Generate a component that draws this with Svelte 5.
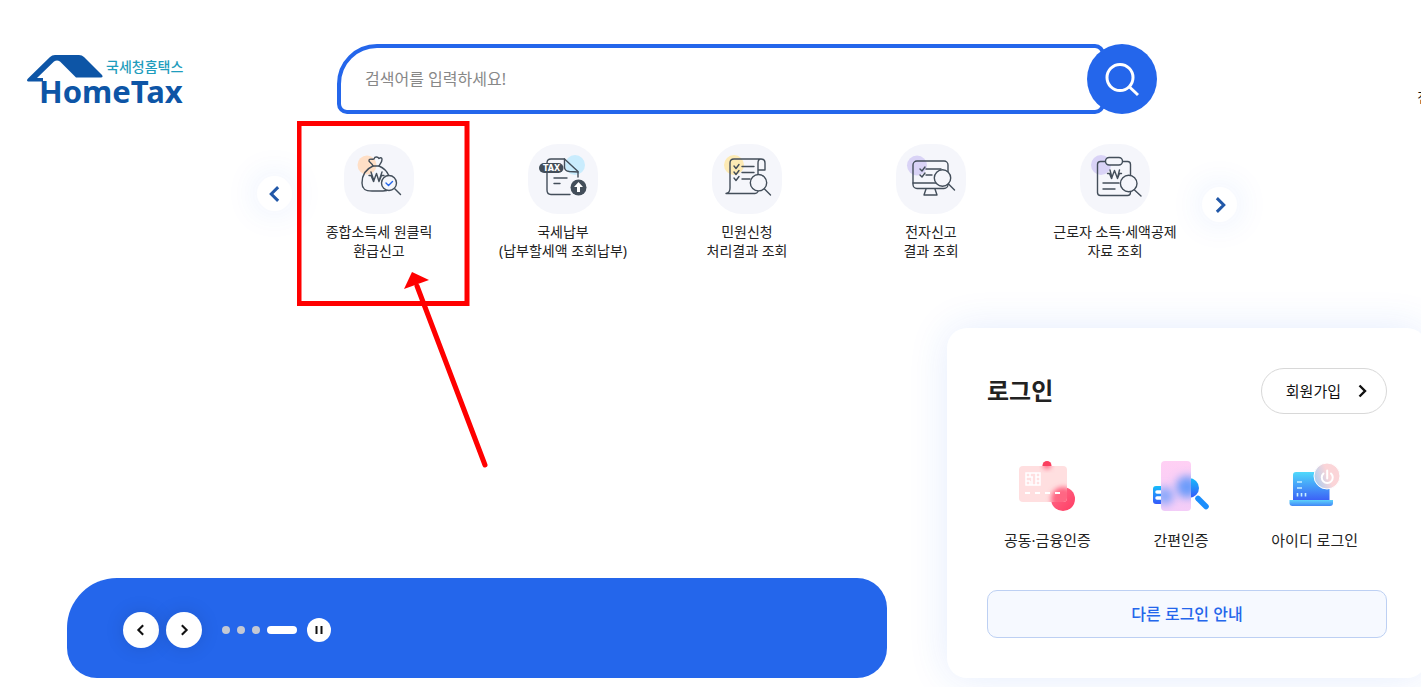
<script>
  const menus = [
    { icon: "refund", lines: ["종합소득세 원클릭", "환급신고"] },
    { icon: "tax", lines: ["국세납부", "(납부할세액 조회납부)"] },
    { icon: "petition", lines: ["민원신청", "처리결과 조회"] },
    { icon: "efile", lines: ["전자신고", "결과 조회"] },
    { icon: "worker", lines: ["근로자 소득·세액공제", "자료 조회"] },
  ];

  const logins = [
    { icon: "cert", label: "공동·금융인증" },
    { icon: "simple", label: "간편인증" },
    { icon: "id", label: "아이디 로그인" },
  ];

  const slides = [0, 1, 2, 3];
  let current = $state(3);
  let playing = $state(true);
  let keyword = $state("");

  function move(step) {
    current = (current + step + slides.length) % slides.length;
  }
</script>

{#snippet chevron(dir)}
  <svg class="chevron" viewBox="0 0 16 16" aria-hidden="true">
    <path d={dir === "left" ? "M10.5 2.5 5 8l5.5 5.5" : "M5.5 2.5 11 8l-5.5 5.5"} />
  </svg>
{/snippet}

<div class="page">
  <header>
    <a class="logo" href="#home" aria-label="국세청홈택스 HomeTax">
      <svg width="162" height="54" viewBox="0 0 162 54">
        <path d="M1 28.500q-2-1 0-3L23 4q2-2 5-2h24q3 0 5 2l18 18q1.500 2-1 2.500H49L33 8.500q-3-2-6 0L10 25h6v3.500z" fill="#0d55a6" />
        <text class="logo-ko" x="79" y="19">국세청홈택스</text>
        <text class="logo-en" x="12" y="50">HomeTax</text>
      </svg>
    </a>
    <form class="search" role="search" onsubmit={(e) => e.preventDefault()}>
      <input type="text" aria-label="검색어" placeholder="검색어를 입력하세요!" bind:value={keyword} />
      <button type="submit" aria-label="검색">
        <svg width="36" height="36" viewBox="0 0 36 36">
          <circle cx="16" cy="16.500" r="13" />
          <path d="m25 25.500 9 8.500" />
        </svg>
      </button>
    </form>
    <a class="all" href="#menu">전</a>
  </header>

  <nav class="quick">
    <button class="arrow prev" type="button" aria-label="이전">{@render chevron("left")}</button>
    <ul>
      {#each menus as menu, i}
        <li>
          <a href="#{menu.icon}">
            <svg class="tile" viewBox="0 0 70 70" aria-hidden="true">
              {#if menu.icon === "refund"}
                <circle class="dot" cx="23" cy="21" r="9.500" fill="#ffdfc6" />
                <path d="M29 22c-1-3-5-4-4-6 1-2 4 0 5-1 1-3 4-2 5-.500 2-1.500 3-.500 3 1 0 3-2 4-3 6.500z" />
                <path d="M29 22c-7 3-11 9-11 17 0 6 3 8 10 8h11c3 0 5-1 6-2M35 22c5 2 8 5 10 10" />
                <path d="M25 31.500h2l2.500 6 3-8 2.500 8 2.500-6H40M27 28l3 9M38 28l-3 9" />
                <circle cx="45" cy="39" r="7.500" fill="#f5f6fb" />
                <path d="m51 45 5.500 5.500" />
                <path d="m42 39 2.500 2.500 4-4" stroke="#2466eb" />
              {:else if menu.icon === "tax"}
                <circle class="dot" cx="47" cy="21" r="10" fill="#c9ecfd" />
                <path d="M19 19q0-4 4-4h13.500L50 27.500V33M19 29v17q0 4.500 4 4.500h19" />
                <path d="M36.500 15v8q0 4 5 4.500l8.500.500" />
                <path d="M26 34h13M26 39.500h6" />
                <rect class="solid" x="11" y="19" width="24.500" height="10" rx="5" />
                <text x="23.500" y="27">TAX</text>
                <circle class="solid" cx="50.500" cy="43.500" r="8" />
                <path d="M50.500 38 55 43h-3v5h-3v-5h-3z" fill="#fff" stroke="none" />
              {:else if menu.icon === "petition"}
                <circle class="dot" cx="22" cy="21" r="10" fill="#fdeab4" />
                <path d="M49 15H22q-4 0-4 4v25q0 5-4 5.500h29q2 0 3-2M46 31V19q0-4 3-4 4 0 4 4v7h-7" />
                <path d="m22 22 2 2.500 3-4M22 28l2 2.500 3-4M22 34l2 2.500 3-4M30 22.500h12M30 28.500h12M30 35h8" />
                <circle cx="46.500" cy="38.700" r="8.200" fill="#f5f6fb" />
                <path d="m52.500 45 6 6" />
              {:else if menu.icon === "efile"}
                <circle class="dot" cx="21" cy="21.500" r="10" fill="#d9d3f6" />
                <rect x="17" y="17" width="35" height="27.500" rx="4" />
                <path d="M17 39h35M30 45l-2 6h13l-2-6" />
                <path d="m24 25 2 2 3-4M24 31l2 2 3-4M30 25h15M30 31h6" />
                <circle cx="46.500" cy="34" r="8.200" fill="#f5f6fb" />
                <path d="m52.500 40 6 6" />
              {:else}
                <circle class="dot" cx="21" cy="21" r="10" fill="#d9d3f6" />
                <rect x="17.500" y="17.500" width="33" height="34" rx="3" />
                <rect x="25.500" y="13.500" width="17" height="7.500" rx="3.700" fill="#f5f6fb" />
                <path d="M27.500 29.500h2l2 5 3-8 3 8 2-5h2M30 26l2 8M39.500 26l-2 8M23 39h16M23 45h12" />
                <circle cx="48.700" cy="39.500" r="8.300" fill="#f5f6fb" />
                <path d="m54.500 46 6.500 6" />
              {/if}
            </svg>
            <span>{menu.lines[0]}<br />{menu.lines[1]}</span>
          </a>
          {#if i === 0}
            <svg class="marker" width="200" height="352" viewBox="0 0 200 352" aria-hidden="true">
              <rect x="2" y="2.500" width="168" height="180" />
              <path d="M188 344 120 165" />
              <path class="head" d="m115 151 17 8-25 9z" />
            </svg>
          {/if}
        </li>
      {/each}
    </ul>
    <button class="arrow next" type="button" aria-label="다음">{@render chevron("right")}</button>
  </nav>

  <main>
    <section class="banner" aria-label="배너">
      <button class="round" type="button" aria-label="이전 배너" onclick={() => move(-1)}>{@render chevron("left")}</button>
      <button class="round" type="button" aria-label="다음 배너" onclick={() => move(1)}>{@render chevron("right")}</button>
      <div class="dots">
        {#each slides as n}
          <button type="button" class:on={n === current} aria-label="배너 {n + 1}" onclick={() => (current = n)}></button>
        {/each}
      </div>
      <button class="pause" type="button" aria-label="정지" onclick={() => (playing = !playing)}>
        <svg width="8" height="8" viewBox="0 0 8 8">
          <path d={playing ? "M1.500 0v8M6.500 0v8" : "M1 0v8l6-4z"} />
        </svg>
      </button>
    </section>

    <section class="login">
      <div class="login-head">
        <h2>로그인</h2>
        <a class="join" href="#join">회원가입 {@render chevron("right")}</a>
      </div>
      <ul>
        {#each logins as login}
          <li>
            <a href="#{login.icon}">
              <svg width="60" height="60" viewBox="0 0 60 60" aria-hidden="true">
                {#if login.icon === "cert"}
                  <defs>
                    <linearGradient id="red" x1="0" y1="0" x2="1" y2="1">
                      <stop offset="0" stop-color="#ff6f8c" />
                      <stop offset="1" stop-color="#ff3c63" />
                    </linearGradient>
                    <filter id="soft" x="-50%" y="-50%" width="200%" height="200%"><feGaussianBlur stdDeviation="2.500" /></filter>
                    <clipPath id="card"><rect x="2" y="10" width="48" height="36" rx="4" /></clipPath>
                  </defs>
                  <circle cx="30" cy="9.500" r="4.500" fill="#fa3f5f" />
                  <circle cx="46" cy="43" r="12" fill="url(#red)" />
                  <g clip-path="url(#card)">
                    <rect x="2" y="10" width="48" height="36" fill="#ffdfe0" />
                    <circle cx="46" cy="43" r="12" fill="#ff6683" filter="url(#soft)" />
                    <circle cx="30" cy="9" r="4" fill="#ff6683" filter="url(#soft)" />
                  </g>
                  <path d="M9 17h14v12H9zM13 17v4H9M13 25v4M9 25h4M19 17v12M15 21v8M13 21h3M19 21h4M19 25h4" fill="none" stroke="#fff" stroke-width="1.500" />
                  <path d="M8 37h5M18 37h5M28 37h5M38 37h5" stroke="#fff" stroke-width="2" />
                {:else if login.icon === "simple"}
                  <defs>
                    <linearGradient id="blue" x1="0" y1="0" x2="0" y2="1">
                      <stop offset="0" stop-color="#16bdfb" />
                      <stop offset="1" stop-color="#3558fa" />
                    </linearGradient>
                    <linearGradient id="pink" x1="0" y1="0" x2="0" y2="1">
                      <stop offset="0" stop-color="#ffd0f4" />
                      <stop offset="1" stop-color="#f4cdf8" />
                    </linearGradient>
                    <filter id="blob" x="-80%" y="-80%" width="260%" height="260%"><feGaussianBlur stdDeviation="4.500" /></filter>
                    <clipPath id="phone"><rect x="10" y="5" width="30" height="50" rx="4" /></clipPath>
                  </defs>
                  <rect x="2" y="30" width="20" height="18" rx="3" fill="url(#blue)" />
                  <path d="M6 36h5M6 42h5" stroke="#fff" stroke-width="3.500" stroke-linecap="round" />
                  <circle cx="38" cy="32" r="10" fill="url(#blue)" />
                  <path d="m47 42.500 8 8" stroke="#1b8efc" stroke-width="5.500" stroke-linecap="round" />
                  <g clip-path="url(#phone)">
                    <rect x="10" y="5" width="30" height="50" fill="url(#pink)" />
                    <circle cx="36" cy="31" r="11" fill="#6d9cfa" filter="url(#blob)" />
                    <circle cx="14" cy="40" r="9" fill="#8aa8fb" filter="url(#blob)" />
                  </g>
                {:else}
                  <defs>
                    <linearGradient id="screen" x1="0" y1="0" x2="0" y2="1">
                      <stop offset="0" stop-color="#4fd9fb" />
                      <stop offset="1" stop-color="#3c62f6" />
                    </linearGradient>
                    <linearGradient id="base" x1="0" y1="0" x2="0" y2="1">
                      <stop offset="0" stop-color="#5ed2fb" />
                      <stop offset="1" stop-color="#4386f7" />
                    </linearGradient>
                    <linearGradient id="power" x1="0" y1=".8" x2="1" y2=".4">
                      <stop offset="0" stop-color="#a5cdf3" />
                      <stop offset=".6" stop-color="#fbd5d8" />
                    </linearGradient>
                  </defs>
                  <path d="M8 44V19q0-3 3-3h33.500v28z" fill="url(#screen)" />
                  <path d="M4.500 44H48v3q0 3-3 3H7.500q-3 0-3-3z" fill="url(#base)" />
                  <path d="M12 26h5M12 32h5M12.500 37v3.500M16.500 37v3.500M20.500 37v3.500" stroke="#c9f0ff" stroke-width="1.600" />
                  <circle cx="42" cy="20" r="13" fill="url(#power)" stroke="#fff" />
                  <path d="M38.500 17.500a5.500 5.500 0 1 0 7.500 0M42.200 14.500v8" fill="none" stroke="#fff" stroke-width="2" stroke-linecap="round" />
                {/if}
              </svg>
              <span>{login.label}</span>
            </a>
          </li>
        {/each}
      </ul>
      <a class="guide" href="#guide">다른 로그인 안내</a>
    </section>
  </main>
</div>

<style>
  :global(body) {
    background: #fff;
    color: #222;
    font-family: "Noto Sans", "Noto Sans CJK KR", sans-serif;
    font-size: 15px;
  }
  .page {
    overflow: hidden;
    padding: 44px 0 9px 67px;
  }
  a {
    color: inherit;
    text-decoration: none;
  }
  button {
    padding: 0;
    border: 0;
    cursor: pointer;
    font: inherit;
  }
  ul {
    display: flex;
    margin: 0;
    padding: 0;
    list-style: none;
  }
  .chevron {
    width: 16px;
    height: 16px;
    fill: none;
    stroke: currentColor;
    stroke-width: 2.4;
  }

  /* header */
  header {
    display: grid;
    grid-template-columns: 1fr minmax(0, 820px) 1fr;
    margin-right: -6px;
  }
  .logo {
    margin: 9px 0 0 -40px;
  }
  .logo svg {
    display: block;
    overflow: visible;
  }
  .logo-ko {
    fill: #1f9dbd;
    font-size: 14px;
    font-weight: 500;
  }
  .logo-en {
    fill: #0d55a6;
    font-size: 31px;
    font-weight: 700;
  }
  .search {
    display: flex;
    height: 70px;
  }
  .search input {
    flex: 1;
    min-width: 0;
    box-sizing: border-box;
    padding: 0 24px;
    border: 4px solid #2466eb;
    border-radius: 40px 10px 10px 10px;
    background: #fff;
    font: inherit;
    font-size: 16px;
    outline: none;
  }
  .search input::placeholder {
    color: #888;
  }
  .search button {
    display: grid;
    place-items: center;
    width: 70px;
    margin-left: -18px;
    border-radius: 50%;
    background: #2466eb;
  }
  .search svg {
    fill: none;
    stroke: #fff;
    stroke-width: 3;
  }
  .all {
    justify-self: end;
    align-self: end;
    margin: 0 -4px 7px 0;
    color: #111;
  }

  /* quick menu */
  .quick {
    display: flex;
    align-items: flex-start;
    justify-content: center;
    margin: 30px -6px 0 0;
  }
  .quick ul {
    flex: 0 1 920px;
  }
  .quick li {
    position: relative;
    flex: 1;
  }
  .quick li a {
    display: flex;
    flex-direction: column;
    align-items: center;
    gap: 8px;
    font-size: 14px;
    line-height: 19px;
    text-align: center;
    white-space: nowrap;
  }
  .tile {
    width: 70px;
    height: 70px;
    border-radius: 30px;
    background: #f5f6fb;
    fill: none;
    stroke: #434e5a;
    stroke-width: 1.4;
    stroke-linecap: round;
    stroke-linejoin: round;
  }
  .tile .dot {
    stroke: none;
  }
  .tile .solid {
    fill: #434e5a;
    stroke: none;
  }
  .tile text {
    fill: #fff;
    stroke: none;
    font-family: "DejaVu Sans", sans-serif;
    font-size: 8px;
    font-weight: 700;
    text-anchor: middle;
  }
  .marker {
    position: absolute;
    top: -23px;
    left: 10px;
    z-index: 2;
    fill: none;
    stroke: #f00;
    stroke-width: 5;
    stroke-linecap: round;
    pointer-events: none;
  }
  .marker .head {
    fill: #f00;
    stroke: none;
  }
  .arrow {
    display: grid;
    place-items: center;
    flex: none;
    width: 35px;
    height: 35px;
    border-radius: 50%;
    background: #fff;
    box-shadow: 0 0 35px rgba(36, 102, 235, 0.12);
    color: #2258a8;
  }
  .arrow .chevron {
    width: 20px;
    height: 20px;
  }
  .prev {
    margin: 32px -5px 0 0;
  }
  .next {
    margin: 43px 0 0 -5px;
  }

  /* banner and login */
  main {
    display: flex;
    align-items: flex-end;
    gap: 60px;
    margin: 68px -6px 0 0;
  }
  .banner {
    display: flex;
    flex: 1;
    align-items: center;
    box-sizing: border-box;
    height: 100px;
    padding: 4px 56px 0;
    border-radius: 50px 30px 30px 30px;
    background: #2466eb;
  }
  .round,
  .pause {
    display: grid;
    place-items: center;
    width: 36px;
    height: 36px;
    border-radius: 50%;
    background: #fff;
    color: #111;
    box-shadow: 0 0 20px rgba(0, 0, 0, 0.12);
  }
  .round .chevron {
    width: 14px;
    height: 14px;
  }
  .round + .round {
    margin-left: 7px;
  }
  .dots {
    display: flex;
    gap: 7px;
    margin: 0 10px 0 20px;
  }
  .dots button {
    width: 8px;
    height: 8px;
    border-radius: 4px;
    background: #c3c8d4;
  }
  .dots .on {
    width: 30px;
    background: #fff;
  }
  .pause {
    width: 24px;
    height: 24px;
    box-shadow: none;
  }
  .pause svg {
    stroke: #111;
    stroke-width: 2;
  }
  .login {
    flex: none;
    box-sizing: border-box;
    width: 480px;
    padding: 40px;
    border-radius: 20px;
    background: #fff;
    box-shadow: 0 0 40px rgba(36, 102, 235, 0.12);
  }
  .login-head {
    display: flex;
    align-items: center;
    justify-content: space-between;
  }
  h2 {
    margin: 0;
    font-size: 24px;
    font-weight: 700;
    line-height: 36px;
  }
  .join {
    display: flex;
    align-items: center;
    gap: 13px;
    padding: 0 16px 0 24px;
    border: 1px solid #d8d8d8;
    border-radius: 23px;
    color: #111;
    line-height: 44px;
  }
  .login ul {
    justify-content: space-between;
    margin: 42px 0 39px;
    padding: 0 29px 0 17px;
  }
  .login li a {
    display: flex;
    flex-direction: column;
    align-items: center;
    gap: 13px;
    line-height: 22px;
  }
  .login li svg {
    margin: 0 -6px;
  }
  .guide {
    display: block;
    border: 1px solid #bdd0f3;
    border-radius: 10px;
    background: #f6f9ff;
    color: #2466eb;
    font-size: 16px;
    font-weight: 500;
    line-height: 46px;
    text-align: center;
  }
</style>
